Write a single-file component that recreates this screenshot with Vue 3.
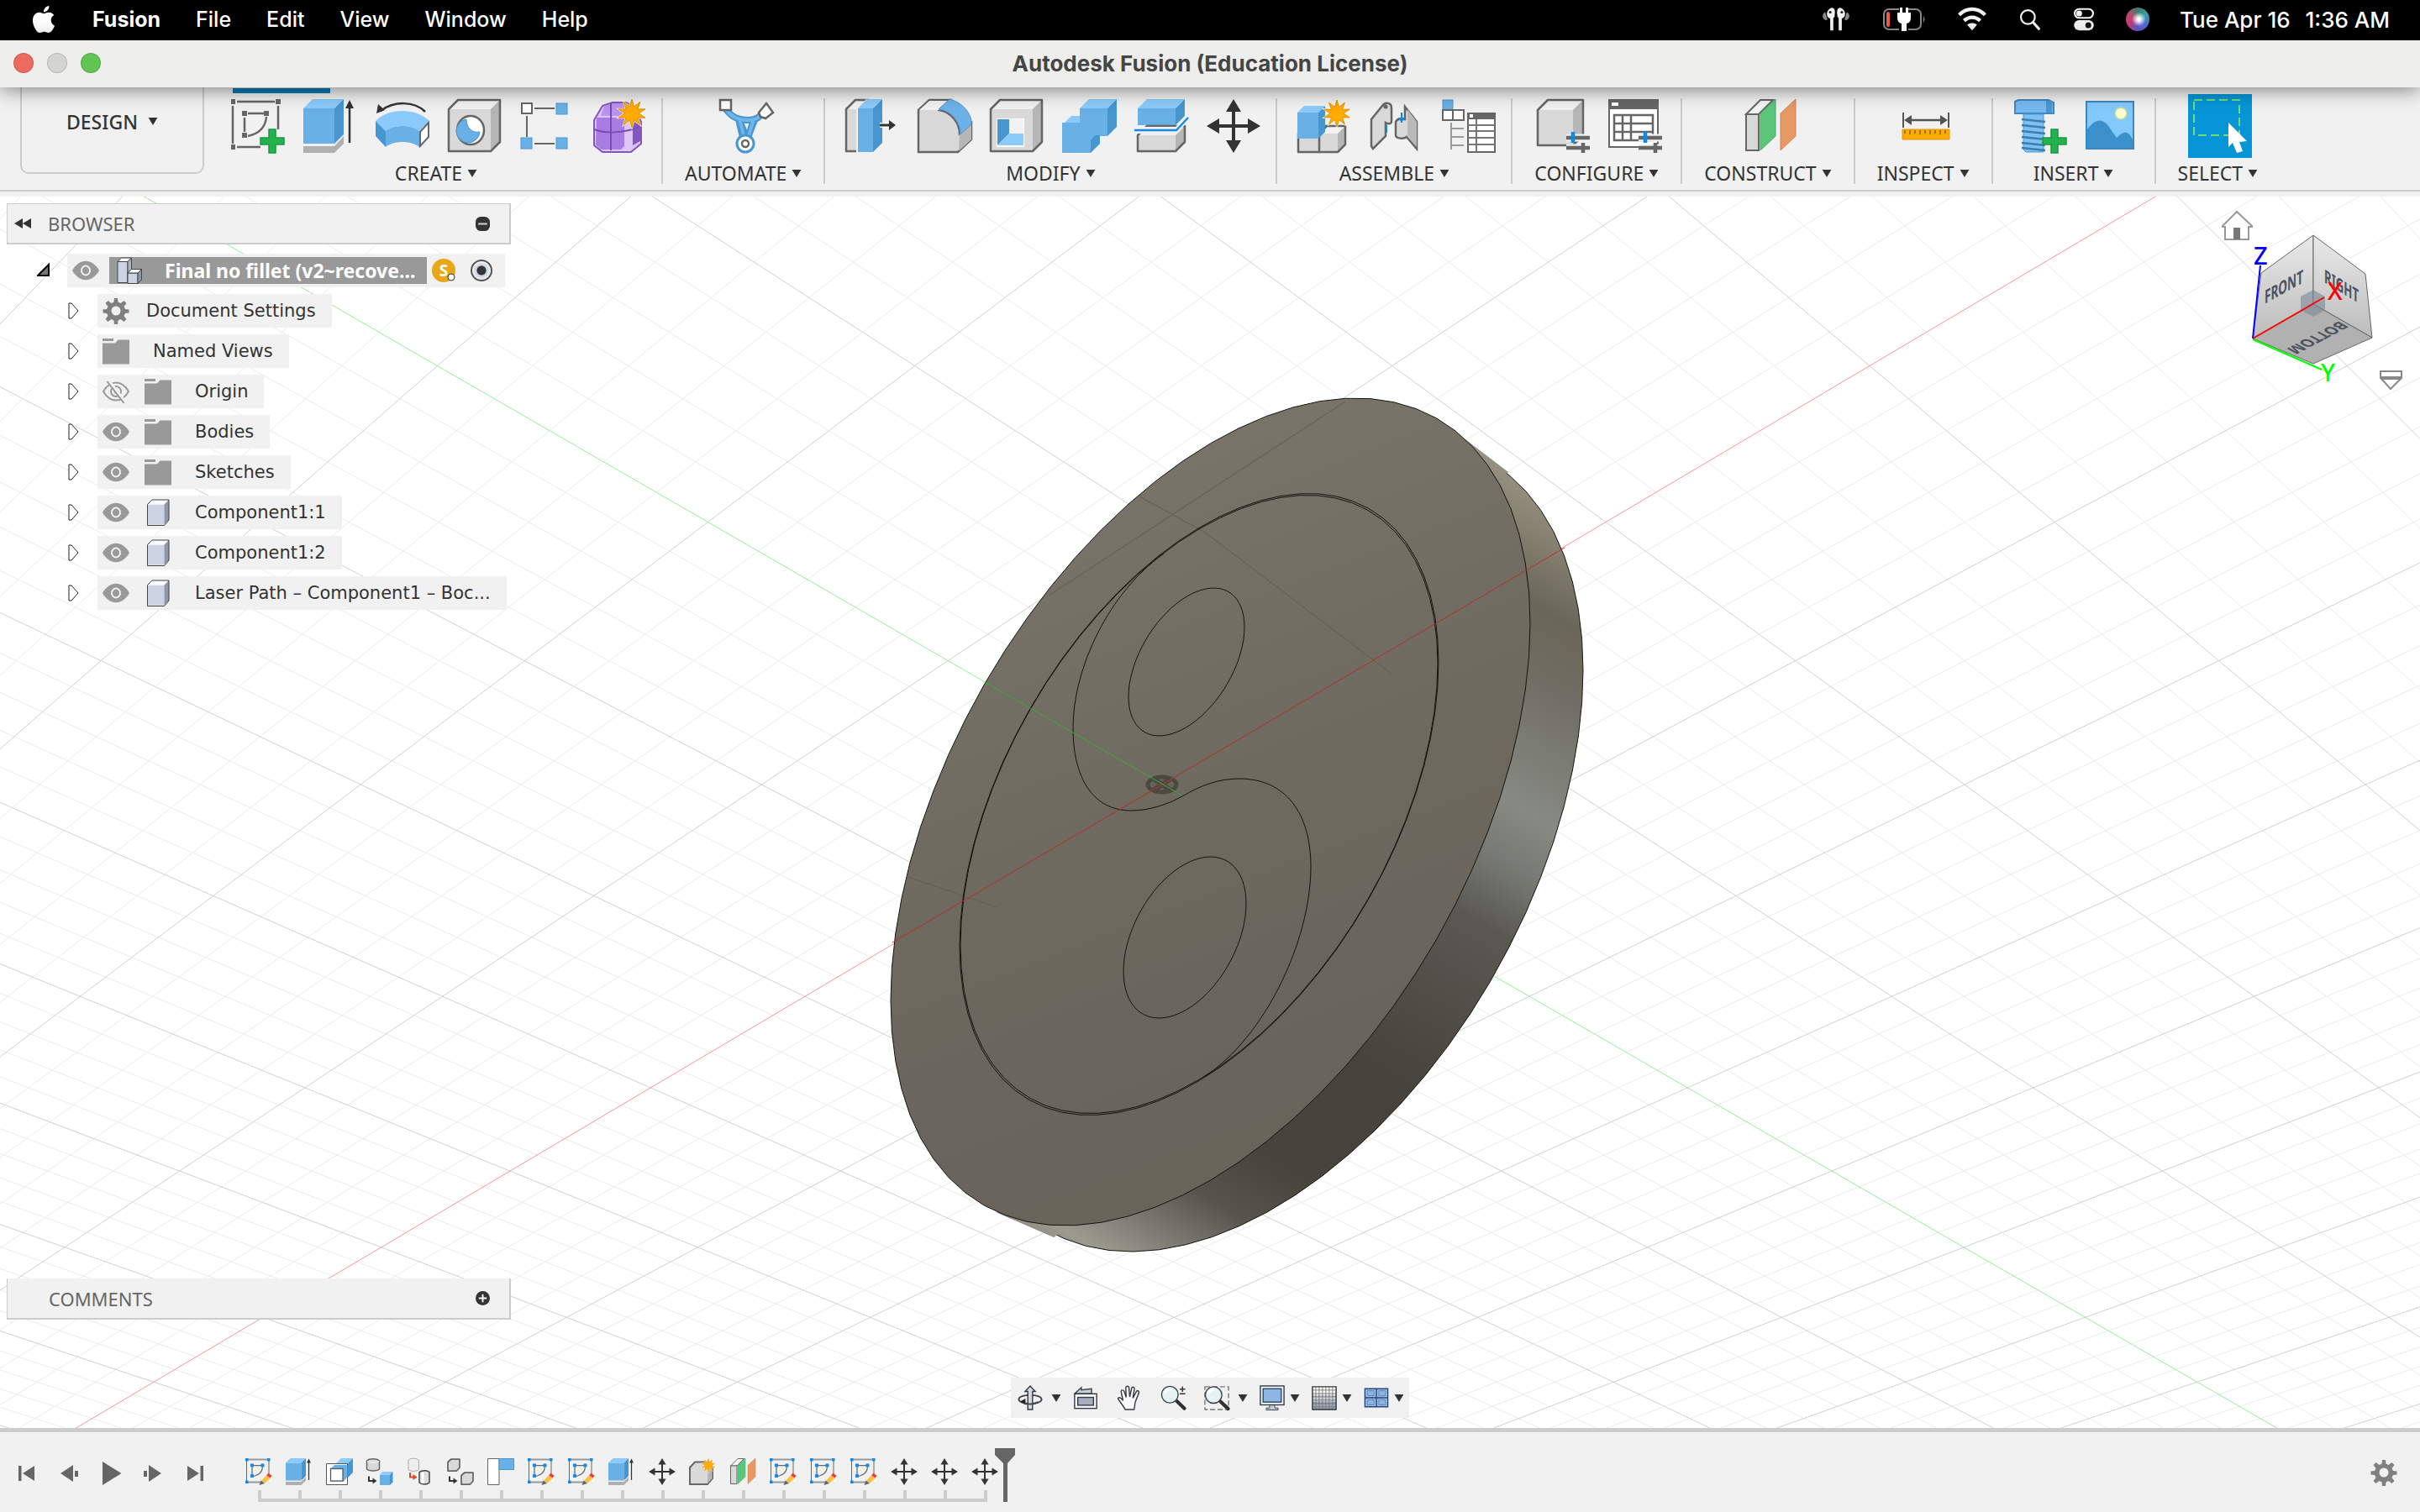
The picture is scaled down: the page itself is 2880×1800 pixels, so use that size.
<script setup>
import { h } from 'vue'

const starPoints = (cx, cy, outer, inner, n = 10) =>
  Array.from({ length: n * 2 }, (_, k) => {
    const r = k % 2 ? inner : outer
    const a = (Math.PI * k) / n - Math.PI / 2
    return `${(cx + r * Math.cos(a)).toFixed(1)},${(cy + r * Math.sin(a)).toFixed(1)}`
  }).join(' ')

const star = (cx, cy, r) =>
  `<polygon points="${starPoints(cx, cy, r + 3, r / 2 + 2)}" fill="#f8f8f8"/><polygon points="${starPoints(cx, cy, r, r / 2)}" fill="#ffab00" stroke="#e09000" stroke-width="1"/>`

const plus = '<path d="M45 36h8v10h10v8h-10v10h-8v-10h-10v-8h10z" fill="#25b14f" stroke="#1b9741" stroke-width="1.5"/>'

// Shaded box: front, top and right faces
const box = (x, y, w, ht, d, c, s = 'none', sw = 2) =>
  `<g stroke="${s}" stroke-width="${sw}" stroke-linejoin="round"><path d="M${x} ${y + d}h${w}v${ht}h${-w}z" fill="${c[0]}"/><path d="M${x} ${y + d}l${d} ${-d}h${w}l${-d} ${d}z" fill="${c[1]}"/><path d="M${x + w} ${y + d}l${d} ${-d}v${ht}l${-d} ${d}z" fill="${c[2]}"/></g>`

const blue = ['#69b0e6', '#8bcbfb', '#4896d0']
const grey = ['#d9d9d9', '#f2f2f2', '#b6b6b6']
const outline = (x, y, w, ht, d) =>
  `<path d="M${x} ${y + d}l${d} ${-d}h${w}v${ht}l${-d} ${d}h${-w}z" fill="none" stroke="#666" stroke-width="2.5" stroke-linejoin="round"/>`
const greyBox = (x, y, w, ht, d) => box(x, y, w, ht, d, grey) + outline(x, y, w, ht, d)

const sliders = '<path d="M36 46h28M36 58h28" stroke="#f1f1f1" stroke-width="9"/><path d="M36 46h28M36 58h28M56 52v12" stroke="#666" stroke-width="4.500"/><path d="M44 39v13" stroke="#0b8be8" stroke-width="4.500"/>'
const sketchLines = '<path d="M7 3h45M2 8v45M56 8v28M7 57h28M20 17h19M16 22v17M42 21c-1 12-8 20-22 23" fill="none" stroke="#666" stroke-width="2.500"/>'
const gear = '<path d="M28 2h8l1 9 6 3 8-6 6 6-6 8 3 6 9 1v8l-9 1-3 6 6 8-6 6-8-6-6 3-1 9h-8l-1-9-6-3-8 6-6-6 6-8-3-6-9-1v-8l9-1 3-6-6-8 6-6 8 6 6-3z" fill="#808080"/>'

const glyphs = {
  sketch: sketchLines + '<g fill="#666"><path d="M0 0h5v6h-5zM53 0h6v6h-6zM0 54h5v6h-5zM13 14h6v6h-6zM39 14h6v6h-6zM13 40h6v6h-6z"/></g>' + plus,
  sketchEdit: '<path d="M6 3h48M6 57h34" stroke="#999" stroke-width="4"/><path d="M3 6v48M56 6v32" stroke="#666" stroke-width="2"/><path d="M20 17h18M16 21v18M41 21c-1 12-8 19-21 22" fill="none" stroke="#666" stroke-width="2.500"/><g fill="#138be8"><path d="M0 0h7v7h-7zM52 0h7v7h-7zM0 53h7v7h-7zM12 13h8v8h-8zM37 13h8v8h-8zM12 38h8v8h-8z"/></g><path d="M55 35l8 7-4 5-9-6z" fill="#f03a3a"/><path d="M50 41l9 7-13 12-9-6z" fill="#f9bf43"/><path d="M37 53l9 7-13 4z" fill="#666"/>',
  extrude: box(0, 0, 37, 42, 11, blue) + '<path d="M0 56h37l11-12v9l-11 11h-37z" fill="#b0b0b0"/><path d="M55 52v-44" stroke="#333" stroke-width="2.500"/><path d="M50 11h10l-5-10z" fill="#333"/>',
  revolve: '<path d="M59 15c-13-13-37-13-53-1" fill="none" stroke="#333" stroke-width="2.500"/><path d="M1 17l2-11 8 7z" fill="#333"/><path d="M0 26c15-16 48-16 64 0l-12 12c-10-8-30-8-40 0z" fill="#8bcbfb"/><path d="M12 38c10-8 30-8 40 0v19c-10-8-30-8-40 0z" fill="#69b0e6"/><path d="M0 26l12 12v19l-12-13z" fill="#4896d0"/><path d="M53 39l10-11v17l-10 11z" fill="#fff" stroke="#666" stroke-width="2"/>',
  hole: greyBox(1, 1, 50, 50, 11) + '<ellipse cx="27" cy="37" rx="16" ry="17" fill="#fff" stroke="#666" stroke-width="2.500"/><path d="M22 24a14 14 0 1 0 16 15c-9 2-16-5-16-15z" fill="#69b0e6" stroke="#4896d0"/>',
  pattern: '<path d="M17 11h24M8 20v25M17 53h24" stroke="#666" stroke-width="2"/><rect x="2" y="5" width="12" height="12" fill="#fff" stroke="#666" stroke-width="2"/><g fill="#69b0e6" stroke="#4a98d2"><rect x="43" y="5" width="13" height="13"/><rect x="1" y="46" width="13" height="13"/><rect x="43" y="46" width="13" height="13"/></g>',
  form: '<path d="M12 8l12-4h16l10 5 8 18v26l-12 10h-34l-10-8v-30z" fill="#dcc6f5" stroke="#8258b5" stroke-width="2"/><path d="M14 8l10-3h14l6 4-6 11h-28z" fill="#ba92ef"/><path d="M5 22h33v34l-4 4h-24l-6-6z" fill="#a87ce2"/><path d="M48 24l9 6v20l-9 5z" fill="#8655c2"/><path d="M2 36c12 5 34 5 54-3M22 5v56" fill="none" stroke="#7a4cb2" stroke-width="2"/>' + star(47, 17, 17),
  automate: '<path d="M7 11c8 11 16 14 28 14s15-7 19-12M23 24l6 26M41 24l-8 26M24 25h18l-9 23z" fill="none" stroke="#4997d2" stroke-width="8"/><path d="M7 11c8 11 16 14 28 14s15-7 19-12M24 24l7 26M41 24l-8 26" fill="none" stroke="#6fb5ea" stroke-width="4"/><path d="M1 1h13v12h-13z" fill="#fff" stroke="#666" stroke-width="2.500"/><path d="M47 16l9-11 8 11-9 7-6-2z" fill="#fff" stroke="#666" stroke-width="2.500"/><circle cx="31" cy="53" r="10" fill="#fff" stroke="#4997d2" stroke-width="3"/><circle cx="31" cy="53" r="4" fill="#fff" stroke="#666" stroke-width="2.500"/>',
  pressPull: greyBox(1, 1, 16, 50, 11) + '<path d="M13 12l12-12h21v51l-12 13h-21z" fill="#f1f1f1"/>' + box(15, 0, 18, 52, 11, blue) + '<path d="M41 31h13" stroke="#fff" stroke-width="6"/><path d="M41 31h13" stroke="#333" stroke-width="3"/><path d="M52 25l8 6-8 6z" fill="#333"/>',
  fillet: '<path d="M1 13l13-12h24l-12 12c14 2 24 16 24 28l14-13v20l-16 15h-47z" fill="#d9d9d9" stroke="#666" stroke-width="2.500"/><path d="M2 13l12-11h24l-12 11z" fill="#f2f2f2"/><path d="M50 41l14-11v18l-15 14z" fill="#b6b6b6"/><path d="M25 12l13-12c16 4 27 18 26 30l-13 12c0-14-10-28-26-30z" fill="#6cb2e8" stroke="#4896d0"/>',
  shell: greyBox(1, 1, 50, 50, 11) + '<path d="M8 23h33v34h-33z" fill="#fff"/><path d="M9 24h14v17l-14 14z" fill="#4896d0"/><path d="M23 41h17v14h-31z" fill="#8bcbfb"/><path d="M23 24h17v17h-17z" fill="#f2f2f2"/>',
  combine: box(21, 0, 33, 33, 11, blue) + box(0, 20, 34, 33, 11, blue) + '<path d="M21 12h33v31h-15l-5 6h-34v-21h21z" fill="#69b0e6"/>',
  split: box(4, 0, 45, 20, 11, blue) + greyBox(4, 32, 45, 19, 11) + '<path d="M0 33h49l15-15v8l-13 15h-51z" fill="#f1f1f1"/><path d="M0 37h50l14-15" fill="none" stroke="#138be8" stroke-width="2.500"/>',
  move: '<path d="M32 9v46M9 32h46" stroke="#333" stroke-width="4"/><path d="M32 0l9 15h-18zM32 64l9-15h-18zM0 32l15-9v18zM64 32l-15-9v18z" fill="#333"/>',
  newComponent: greyBox(1, 32, 25, 22, 9) + greyBox(26, 32, 22, 22, 9) + box(0, 8, 25, 31, 8, blue) + star(47, 17, 16),
  joint: '<path d="M2 24l13-16c3-5 11-4 11 2v16c0 4-4 4-7 2v16l-15 15-2-3z" fill="#d9d9d9" stroke="#666" stroke-width="2.500"/><circle cx="19" cy="9" r="2.500" fill="#666"/><path d="M42 9l14 18v32l-12-14c-3 3-13 2-13-2v-16c2-4 7-4 11-3z" fill="#d9d9d9" stroke="#666" stroke-width="2.500"/><path d="M45 12l11 15v30l-11-14z" fill="#b9b9b9"/><path d="M20 31v9M38 16v12" stroke="#0b8be8" stroke-width="2"/><path d="M34 22h8l-4 6z" fill="#0b8be8"/>',
  bom: '<rect x="1" y="1" width="12" height="12" fill="#69b0e6" stroke="#4896d0"/><path d="M1 13h12v12h-12zM13 13h13v12h-13z" fill="#fff" stroke="#666" stroke-width="2"/><path d="M11 28v32M11 35h15M11 45h15M11 55h15" stroke="#999" stroke-width="2"/><rect x="31" y="17" width="32" height="46" fill="#fff" stroke="#666" stroke-width="2"/><path d="M30 16h34v8h-34z" fill="#666"/><path d="M31 31h32M31 38h32M31 46h32M31 54h32M41 24v39" stroke="#777" stroke-width="2"/><path d="M33 18h4v4h-4z" fill="#fff"/>',
  configure: greyBox(2, 1, 42, 42, 12) + sliders,
  configTable: '<rect x="1" y="1" width="58" height="56" fill="#fff" stroke="#666" stroke-width="2"/><path d="M0 0h60v12h-60z" fill="#666"/><path d="M4 4h8v4h-8z" fill="#fff"/><path d="M7 19h46v30h-46zM7 29h46M7 39h46M17 19v30M27 19v30" fill="none" stroke="#666" stroke-width="2.500"/>' + sliders,
  plane: '<path d="M3 18l17-17h15l-17 17z" fill="#f5f5f5" stroke="#666" stroke-width="2"/><path d="M3 18h15v43h-15z" fill="#d9d9d9" stroke="#666" stroke-width="2"/><path d="M20 17l18-17v44l-18 17z" fill="#5bc67c" stroke="#43a964"/><path d="M44 17l18-17v44l-18 17z" fill="#e69964" stroke="#cf8350"/>',
  measure: '<path d="M5 16v18M59 16v18" stroke="#555" stroke-width="2"/><path d="M12 25h40" stroke="#555" stroke-width="2.500"/><path d="M6 25l9-6v12zM58 25l-9-6v12z" fill="#555"/><path d="M4 36h56v12h-56z" fill="#ffab00" stroke="#e59400"/><path d="M7 37v4M13 37v5M19 37v4M25 37v5M31 37v4M37 37v5M43 37v4M49 37v5M55 37v4" stroke="#80601c" stroke-width="1.500"/>',
  bolt: '<path d="M2 3l4-2h36l6 3v13h-46z" fill="#76baf0" stroke="#3f87bd" stroke-width="2"/><path d="M39 2h7v14h-7z" fill="#4b97d0"/><path d="M12 18h24v45h-21l-3-3z" fill="#7cc0f5" stroke="#4d9bd5"/><path d="M10 24l28 3M10 31l28 3M10 38l28 3M10 45l28 3M10 52l28 3M10 58l28 3" stroke="#3d7eac" stroke-width="2.500"/>' + plus,
  image: '<rect x="1" y="3" width="56" height="56" fill="#84c9fc" stroke="#3d88bd" stroke-width="2"/><circle cx="42" cy="17" r="7" fill="#ffffd0" stroke="#b5dba0" stroke-width="1.500"/><path d="M2 36c10-14 20-14 28 0l7 10c9-9 13-9 19 2v10h-54z" fill="#3c91cd"/>',
  select: '<path d="M0-6h76v76h-76z" fill="#0696d7"/><path d="M7 1h54v42h-54z" fill="none" stroke="#72dd78" stroke-width="2" stroke-dasharray="10 5"/><path d="M48 28l22 22-9 1 4 11-7 2-5-12-5 5z" fill="#fff"/>',
  boxCopy: box(24, 0, 28, 34, 12, blue) + '<path d="M1 13h50v50h-50z" fill="#fff" stroke="#555" stroke-width="2"/><path d="M11 25l9-9h31v28l-9 11h-31z" fill="#69b0e6"/><rect x="11" y="25" width="29" height="29" fill="#fff" stroke="#555" stroke-width="2.500"/>',
  cylToBox: '<path d="M1 6c6-6 24-6 30 0v20c-6 5-24 5-30 0z" fill="#d9d9d9" stroke="#666" stroke-width="3"/><path d="M2 7c6 4 22 4 28 0" fill="none" stroke="#eee" stroke-width="3"/>' + box(32, 32, 24, 25, 7, blue) + '<path d="M6 43v11h10" fill="none" stroke="#333" stroke-width="4"/><path d="M15 47l10 7-10 7z" fill="#333"/>',
  cylToCyl: '<path d="M4 5c5-6 20-6 25 0v22c-5 5-20 5-25 0z" fill="#eee" stroke="#aaa" stroke-width="2"/><path d="M30 33c5-5 19-5 24 0v25c-5 5-19 5-24 0z" fill="#ddd" stroke="#444" stroke-width="3"/><path d="M38 34v26" stroke="#fff" stroke-width="6"/><path d="M8 34v11h9" fill="none" stroke="#dd4a26" stroke-width="4"/><path d="M15 38l10 7-10 7z" fill="#dd4a26"/>',
  boxToBox: '<g fill="#d9d9d9" stroke="#666" stroke-width="3.500" stroke-linejoin="round"><path d="M2 9l8-7h20v20l-7 8h-21zM34 41l8-7h20v20l-7 8h-21z"/></g><path d="M6 43v11h10" fill="none" stroke="#333" stroke-width="4"/><path d="M15 47l10 7-10 7z" fill="#333"/>',
  rigid: '<path d="M1 1h27v62h-27z" fill="#fff" stroke="#666" stroke-width="2"/><path d="M28 1h35v26h-35z" fill="#69b0e6" stroke="#4896d0" stroke-width="2"/>',
  body: '<path d="M2 22l12-13h30l12 12v27l-12 14h-42z" fill="#d9d9d9" stroke="#666" stroke-width="4"/><path d="M44 26l11-6v28l-11 12z" fill="#b6b6b6"/>' + star(46, 17, 16),
  gear: gear + '<circle cx="32" cy="32" r="11" fill="#f1f1f1"/>',
  folder: '<path d="M0 5h26" fill="none" stroke="#999" stroke-width="6"/><path d="M0 13h30l7-8h27v58h-64z" fill="#999"/>',
  eye: '<path d="M0 32c17-30 47-30 64 0c-17 30-47 30-64 0z" fill="#999"/><ellipse cx="32" cy="32" rx="10" ry="11" fill="#999" stroke="#f1f1f1" stroke-width="4"/>',
  eyeOff: '<path d="M2 32c16-28 44-28 60 0c-16 28-44 28-60 0z" fill="none" stroke="#999" stroke-width="4"/><circle cx="32" cy="32" r="12" fill="none" stroke="#999" stroke-width="4"/><circle cx="32" cy="32" r="5" fill="#999"/><path d="M14 6l40 52" stroke="#f1f1f1" stroke-width="8"/><path d="M11 8l40 52" stroke="#999" stroke-width="4"/>',
  comp: box(7, 2, 40, 48, 11, ['#ccd3e2', '#fafbfd', '#8d97aa']) + '<path d="M7 13l11-11h40v48l-11 13h-40z" fill="none" stroke="#444" stroke-width="2"/>',
  assembly: box(4, 2, 24, 50, 9, ['#ccd3e2', '#fafbfd', '#aab3c5'], '#444', 2) + box(28, 29, 24, 25, 9, ['#ccd3e2', '#fafbfd', '#8d97aa'], '#444', 2),
  first: '<path d="M8 14h7v36h-7zM46 14v36l-28-18z" fill="#666"/>',
  back: '<path d="M40 12v40l-30-20zM44 26h8v14h-8z" fill="#666"/>',
  play: '<path d="M12 4v56l45-28z" fill="#666"/>',
  next: '<path d="M24 12v40l30-20zM12 26h8v14h-8z" fill="#666"/>',
  last: '<path d="M49 14h7v36h-7zM18 14v36l28-18z" fill="#666"/>',
  orbit: '<ellipse cx="32" cy="36" rx="29" ry="11" fill="none" stroke="#41464f" stroke-width="4"/><path d="M26 62v-46h-7l13-14 13 14h-7v46z" fill="#d5dae2" stroke="#333a45" stroke-width="3"/><path d="M7 41l13-7v16z" fill="#222"/><path d="M16 46c10 3 26 3 36-3" fill="none" stroke="#41464f" stroke-width="4"/>',
  look: '<path d="M5 21l16-15v6l26-3v13z" fill="#c7ccd5" stroke="#3a414c" stroke-width="3"/><rect x="4" y="22" width="56" height="37" fill="#fafafa" stroke="#333a45" stroke-width="3"/><rect x="12" y="31" width="40" height="20" fill="#a7adbb" stroke="#333a45" stroke-width="3"/>',
  hand: '<path d="M22 62c-6-11-14-19-19-28 2-5 7-3 13 5l-5-23c1-5 6-4 8 0l5 15-1-25c2-5 7-4 8 0l2 24 5-23c3-4 7-2 7 2l-4 24 9-17c3-4 8-1 6 4l-9 23-3 19z" fill="#fafafa" stroke="#333a45" stroke-width="3"/>',
  zoom: '<path d="M41 40l20 19" stroke="#2c3138" stroke-width="9" stroke-linecap="round"/><circle cx="24" cy="24" r="21" fill="#e6f2f3" stroke="#3a414c" stroke-width="3"/><path d="M11 20q4-9 14-10" stroke="#fff" stroke-width="6" fill="none"/><path d="M49 10h14M56 3v14M49 22h14" stroke="#333" stroke-width="3"/>',
  zoomFit: '<path d="M2 4h60v58h-60z" fill="none" stroke="#777" stroke-width="3" stroke-dasharray="13 6"/><path d="M41 41l20 19" stroke="#33312c" stroke-width="9" stroke-linecap="round"/><circle cx="24" cy="25" r="21" fill="#e6f2f3" stroke="#3a414c" stroke-width="3"/><path d="M11 21q4-9 14-10" stroke="#fff" stroke-width="6" fill="none"/>',
  monitor: '<path d="M26 50h12l1 8h8v5h-30v-5h8z" fill="#c9ced8" stroke="#333a45" stroke-width="2"/><rect x="2" y="2" width="60" height="48" fill="#fafafa" stroke="#333a45" stroke-width="3"/><rect x="9" y="9" width="46" height="34" fill="#8fb6e0" stroke="#26457c" stroke-width="3"/>',
  grid: '<path d="M2 4h60v58h-60z" fill="#fff"/><path d="M2 24h60v38h-60z" fill="#a0a9b9" opacity=".5"/><path d="M2 42h60v20h-60z" fill="#6e7a90" opacity=".5"/><path d="M2 12.500h60M2 21h60M2 29.500h60M2 38h60M2 46.500h60M2 55h60M10.500 4v58M19 4v58M27.500 4v58M36 4v58M44.500 4v58M53 4v58" stroke="#777" stroke-width="2"/><path d="M2 4h60v58h-60z" fill="none" stroke="#333" stroke-width="3"/>',
  views: '<path d="M3 9h58v46h-58z" fill="#9cc0e8" stroke="#26457c" stroke-width="3"/><path d="M32 9v46M3 32h58" stroke="#26457c" stroke-width="3"/><path d="M9 14h17v13h-17zM38 14h17v13h-17zM9 37h17v13h-17zM38 37h17v13h-17z" fill="#8fb4df" stroke="#5b83b9" stroke-width="2"/>',
  airpods: '<g fill="#f2f2f2"><path d="M14 12c10-12 18-4 15 10v4l-3 3v28h-7v-27c-8-2-9-12-5-18zM50 12c-10-12-18-4-15 10v4l3 3v28h7v-27c8-2 9-12 5-18z"/></g><path d="M8 16l5 17-4 1c-9-3-9-15-1-18zM56 16l-5 17 4 1c9-3 9-15 1-18z" fill="#8a8a8a"/><circle cx="19" cy="16" r="3" fill="#222"/><circle cx="45" cy="16" r="3" fill="#222"/>',
  wifi: '<g fill="none" stroke="#f2f2f2" stroke-width="8"><path d="M3 22c17-17 41-17 58 0M14 35c11-10 25-10 36 0"/></g><path d="M21 44c7-5 15-5 22 0l-11 13z" fill="#f2f2f2"/>',
  search: '<circle cx="26" cy="26" r="19" fill="none" stroke="#f2f2f2" stroke-width="5"/><path d="M40 40l16 18" stroke="#f2f2f2" stroke-width="7" stroke-linecap="round"/>',
  control: '<rect x="7" y="4" width="50" height="24" rx="12" fill="none" stroke="#f2f2f2" stroke-width="5"/><circle cx="19" cy="16" r="8" fill="#f2f2f2"/><rect x="5" y="34" width="54" height="28" rx="14" fill="#f2f2f2"/><circle cx="44" cy="48" r="8" fill="#111"/>',
}

const Icon = (props) =>
  h('svg', { viewBox: '0 0 64 64', class: 'icon', 'aria-hidden': 'true', innerHTML: glyphs[props.name] })
Icon.props = ['name']

const Caret = () =>
  h('svg', { viewBox: '0 0 12 10', class: 'caret', 'aria-hidden': 'true' }, [h('path', { d: 'M0 0h12l-6 10z', fill: '#333' })])

const menus = ['File', 'Edit', 'View', 'Window', 'Help']

const groups = [
  { label: 'CREATE', icons: ['sketch', 'extrude', 'revolve', 'hole', 'pattern', 'form'] },
  { label: 'AUTOMATE', icons: ['automate'] },
  { label: 'MODIFY', icons: ['pressPull', 'fillet', 'shell', 'combine', 'split', 'move'] },
  { label: 'ASSEMBLE', icons: ['newComponent', 'joint', 'bom'] },
  { label: 'CONFIGURE', icons: ['configure', 'configTable'] },
  { label: 'CONSTRUCT', icons: ['plane'] },
  { label: 'INSPECT', icons: ['measure'] },
  { label: 'INSERT', icons: ['bolt', 'image'] },
  { label: 'SELECT', icons: ['select'] },
]

const tree = [
  { label: 'Document Settings', icons: ['gear'], near: true },
  { label: 'Named Views', icons: ['folder'] },
  { label: 'Origin', icons: ['eyeOff', 'folder'] },
  { label: 'Bodies', icons: ['eye', 'folder'] },
  { label: 'Sketches', icons: ['eye', 'folder'] },
  { label: 'Component1:1', icons: ['eye', 'comp'] },
  { label: 'Component1:2', icons: ['eye', 'comp'] },
  { label: 'Laser Path – Component1 – Boc...', icons: ['eye', 'comp'] },
]

const navTools = [
  { icon: 'orbit', label: 'Orbit', caret: true, wide: true },
  { icon: 'look', label: 'Look At' },
  { icon: 'hand', label: 'Pan' },
  { icon: 'zoom', label: 'Zoom' },
  { icon: 'zoomFit', label: 'Fit', caret: true, wide: true },
  { icon: 'monitor', label: 'Display Settings', caret: true },
  { icon: 'grid', label: 'Grid and Snaps', caret: true },
  { icon: 'views', label: 'Viewports', caret: true },
]

const playback = [
  { icon: 'first', label: 'Go to start' },
  { icon: 'back', label: 'Step back' },
  { icon: 'play', label: 'Play' },
  { icon: 'next', label: 'Step forward' },
  { icon: 'last', label: 'Go to end' },
]

const timeline = [
  'sketchEdit', 'extrude', 'boxCopy', 'cylToBox', 'cylToCyl', 'boxToBox', 'rigid', 'sketchEdit', 'sketchEdit', 'extrude',
  'move', 'body', 'plane', 'sketchEdit', 'sketchEdit', 'sketchEdit', 'move', 'move', 'move',
]

// Ground plane projection: i runs along X, j along Y, in major grid units
const project = (i, j) => {
  const s = j - i
  const t = i + j
  const w = 1 + 0.05336 * s
  return `${((1383.5 + 76.84 * s + 238.6 * t) / w).toFixed(1)} ${((934 + 189.4 * s) / w).toFixed(1)}`
}
const lineI = (i) => `M${project(i, Math.max(-10, i - 12))}L${project(i, 11)}`
const lineJ = (j) => `M${project(Math.min(10, j + 12), j)}L${project(-11, j)}`
let major = ''
let minor = ''
for (let n = -50; n <= 50; n++) {
  if (n === 0) continue
  const seg = lineI(n / 5) + lineJ(n / 5)
  if (n % 5) minor += seg
  else major += seg
}
const xAxis = lineJ(0)
const yAxis = lineI(0)

// Circle seen in perspective: half extents a and b, skew r
const ring = (cx, cy, a, b, r, n = 72) => {
  const q = Math.sqrt(1 - r * r)
  let d = ''
  for (let k = 0; k < n; k++) {
    const th = (2 * Math.PI * k) / n
    const x = cx + a * Math.cos(th)
    const y = cy - b * (r * Math.cos(th) + q * Math.sin(th))
    d += `${k ? 'L' : 'M'}${x.toFixed(1)} ${y.toFixed(1)}`
  }
  return d + 'Z'
}
const face = ring(1440.5, 966.5, 380.5, 492.5, 0.455)
const backRim = ring(1508, 1006, 376, 484, 0.43)
const inner = ring(1427, 957.5, 284, 368, 0.455)
const innerEdge = ring(1427, 957.5, 285, 370, 0.457)
const eyeTop = ring(1412, 788, 69, 88, 0.47)
const eyeLow = ring(1410, 1116, 73, 96, 0.42)
</script>

<template>
  <div class="app">
    <header class="menubar">
      <nav class="menus" aria-label="Menu bar">
        <button class="apple" aria-label="Apple menu">
          <svg viewBox="0 0 24 24"><path fill="#fff" d="M12.152 6.896c-.948 0-2.415-1.078-3.96-1.04-2.04.027-3.91 1.183-4.961 3.014-2.117 3.675-.546 9.103 1.519 12.09 1.013 1.454 2.208 3.09 3.792 3.039 1.52-.065 2.09-.987 3.935-.987 1.831 0 2.35.987 3.96.948 1.637-.026 2.676-1.48 3.676-2.948 1.156-1.688 1.636-3.325 1.662-3.415-.039-.013-3.182-1.221-3.22-4.857-.026-3.04 2.48-4.494 2.597-4.559-1.429-2.09-3.623-2.324-4.39-2.376-2-.156-3.675 1.09-4.61 1.09zM15.53 3.83c.843-1.012 1.4-2.427 1.245-3.83-1.207.052-2.662.805-3.532 1.818-.78.896-1.454 2.338-1.273 3.714 1.338.104 2.715-.688 3.559-1.701" /></svg>
        </button>
        <button class="strong">Fusion</button>
        <button v-for="m in menus" :key="m">{{ m }}</button>
      </nav>
      <div class="status">
        <Icon name="airpods" class="pods" />
        <svg class="battery" viewBox="0 0 52 28"><path d="M20 2H8a6 6 0 0 0-6 6v12a6 6 0 0 0 6 6h12M31 2h9a6 6 0 0 1 6 6v12a6 6 0 0 1-6 6h-9" fill="none" stroke="#8a8a8a" stroke-width="2" /><path d="M49 10q3 4 0 8z" fill="#8a8a8a" /><rect x="5" y="5" width="4" height="18" rx="2" fill="#f4564a" /><path d="M21 0h3v6h4V0h3v6h3v6q0 6-5 7v9h-6v-9q-5-1-5-7V6h3z" fill="#fff" /></svg>
        <Icon name="wifi" class="wifi" />
        <Icon name="search" />
        <Icon name="control" />
        <span class="siri"></span>
        <time class="clock"><span>Tue Apr 16</span><span>1:36 AM</span></time>
      </div>
    </header>

    <div class="titlebar">
      <div class="lights">
        <button class="light red" aria-label="Close"></button>
        <button class="light off" aria-label="Minimize"></button>
        <button class="light green" aria-label="Zoom"></button>
      </div>
      <h1>Autodesk Fusion (Education License)</h1>
    </div>

    <div class="toolbar">
      <button class="workspace">DESIGN <Caret /></button>
      <div class="groups">
        <section v-for="g in groups" :key="g.label" class="group" :class="g.label.toLowerCase()">
          <div class="tools">
            <button v-for="ic in g.icons" :key="ic" class="tool" :aria-label="ic"><Icon :name="ic" /></button>
          </div>
          <button class="glabel">{{ g.label }}<Caret /></button>
        </section>
      </div>
    </div>

    <main class="viewport">
      <svg class="scene" viewBox="0 234 2880 1466" preserveAspectRatio="xMidYMid slice" aria-hidden="true">
        <defs>
          <linearGradient id="side" gradientUnits="userSpaceOnUse" x1="1800" y1="540" x2="1250" y2="1480">
            <stop offset="0" stop-color="#9d9686" />
            <stop offset=".05" stop-color="#8b8575" />
            <stop offset=".13" stop-color="#6a6658" />
            <stop offset=".2" stop-color="#706e64" />
            <stop offset=".33" stop-color="#868a83" />
            <stop offset=".39" stop-color="#777a74" />
            <stop offset=".46" stop-color="#5a5852" />
            <stop offset=".66" stop-color="#46433c" />
            <stop offset=".8" stop-color="#46443d" />
            <stop offset=".87" stop-color="#56544d" />
            <stop offset=".93" stop-color="#7c7b72" />
            <stop offset=".98" stop-color="#9b9b90" />
            <stop offset="1" stop-color="#8f8c7f" />
          </linearGradient>
          <linearGradient id="face" x1=".3" y1="0" x2=".6" y2="1">
            <stop offset="0" stop-color="#7b766b" />
            <stop offset=".45" stop-color="#6f6b60" />
            <stop offset=".8" stop-color="#69645c" />
            <stop offset="1" stop-color="#68655a" />
          </linearGradient>
          <clipPath id="disc"><path :d="face" /></clipPath>
        </defs>
        <path :d="minor" class="minor" />
        <path :d="major" class="major" />
        <path :d="xAxis" class="x" />
        <path :d="yAxis" class="y" />
        <path :d="backRim" fill="url(#side)" class="edge" />
        <path d="M1724 508L1795 562L1700 620ZM1185 1443L1254 1473L1300 1440Z" fill="url(#side)" />
        <path :d="face" fill="url(#face)" class="edge" />
        <g class="ghost" clip-path="url(#disc)">
          <path d="M1326 575L1433 633L1657 803M1601 478L1248 709M1040 1030L1186 1080" />
        </g>
        <g class="edge" fill="none">
          <path :d="inner" />
          <path :d="innerEdge" />
          <path :d="eyeTop" />
          <path :d="eyeLow" />
          <path d="M1385 659C1320 705 1277 795 1277 867C1277 925 1300 965 1346 965C1367 965 1389 958 1407 948C1429 935 1450 927 1475 927C1530 927 1560 968 1560 1032C1560 1120 1505 1235 1433 1282" />
        </g>
        <ellipse cx="1383" cy="934" rx="17" ry="9" fill="#68645a" stroke="#4c4940" stroke-width="5" />
        <path d="M1374 928L1392 940M1374 940L1392 928" stroke="#4c4940" stroke-width="6" />
        <path d="M1062 1122L1383 934L1862 652" class="x-over" />
        <path d="M1172 812L1407 947" class="y-over" />
      </svg>

      <div class="cube">
        <svg viewBox="2620 234 260 250" aria-label="View cube">
          <defs>
            <linearGradient id="cf" x1="0" y1="0" x2="0" y2="1"><stop offset="0" stop-color="#e9e9e9" /><stop offset="1" stop-color="#bcbcbc" /></linearGradient>
          </defs>
          <g stroke="#666" stroke-width="1">
            <path d="M2753 280L2691 325L2681 403L2753 362Z" fill="url(#cf)" />
            <path d="M2753 280L2815 326L2823 402L2753 362Z" fill="url(#cf)" />
            <path d="M2753 362L2681 403L2753 433L2823 402Z" fill="#b1b1b1" />
          </g>
          <g class="facelabel">
            <text transform="matrix(.68 -.38 0 1.1 2695 362)">FRONT</text>
            <text transform="matrix(.66 .4 0 1.1 2766 336)">RIGHT</text>
            <text transform="matrix(-.74 .39 -.84 -.46 2784 382)">BOTTOM</text>
          </g>
          <path d="M2753 345l14 8v16l-14 8-15-8v-16z" fill="#7b8794" opacity=".6" />
          <path d="M2681 403L2690 316" stroke="#00f" stroke-width="2" />
          <path d="M2681 404L2763 440" stroke="#0f0" stroke-width="2" />
          <path d="M2681 403L2766 354" stroke="#f00" stroke-width="2" />
          <g class="axis">
            <text x="2682" y="315" fill="#00f">Z</text>
            <text x="2770" y="357" fill="#f00">X</text>
            <text x="2762" y="454" fill="#0f0">Y</text>
          </g>
          <path d="M2645 269l17-17 18 17v1h-4v15h-28v-15h-3z" fill="#fff" stroke="#999" stroke-width="2" />
          <path d="M2658 271h8v14h-8z" fill="#777" />
          <path d="M2833 442h25v7h-25zM2834 451h23l-12 12z" fill="#fff" stroke="#888" stroke-width="2" />
        </svg>
      </div>

      <section class="browser">
        <div class="panel">
          <button class="collapse" aria-label="Collapse"><svg viewBox="0 0 20 12"><path d="M10 0v12l-10-6zM20 0v12l-10-6z" fill="#333" /></svg></button>
          <h2>BROWSER</h2>
          <button class="knob" aria-label="Minimize panel"><svg viewBox="0 0 16 16"><rect width="16" height="16" rx="6" fill="#333" /><path d="M3 8h10" stroke="#ccc" stroke-width="2" /></svg></button>
        </div>
        <div class="row root">
          <svg class="tri" viewBox="0 0 16 16"><path d="M1 14L14 1V14Z" fill="#777" stroke="#000" stroke-width="2" /></svg>
          <div class="cell">
            <Icon name="eye" />
            <div class="chosen"><Icon name="assembly" /><span>Final no fillet (v2~recove...</span></div>
            <svg class="badge" viewBox="0 0 28 28"><circle cx="14" cy="14" r="14" fill="#e6a817" /><text x="14" y="21" text-anchor="middle">S</text><circle cx="23" cy="22" r="4" fill="#fff" stroke="#333" /></svg>
            <input type="radio" checked aria-label="Activate component" />
          </div>
        </div>
        <div v-for="r in tree" :key="r.label" class="row">
          <svg class="tri" viewBox="0 0 16 20"><path d="M2 1h3l8 9-8 9h-3z" fill="#fff" stroke="#222" stroke-width="1" /></svg>
          <div class="cell" :class="{ near: r.near }">
            <Icon v-for="ic in r.icons" :key="ic" :name="ic" />
            <span class="name">{{ r.label }}</span>
          </div>
        </div>
      </section>

      <section class="panel comments">
        <h2>COMMENTS</h2>
        <button class="knob" aria-label="Add comment"><svg viewBox="0 0 18 18"><circle cx="9" cy="9" r="9" fill="#333" /><path d="M4 9h10M9 4v10" stroke="#fff" stroke-width="2" /></svg></button>
      </section>

      <div class="navbar">
        <button v-for="n in navTools" :key="n.icon" :aria-label="n.label" :class="{ wide: n.wide, plain: !n.caret }">
          <Icon :name="n.icon" /><Caret v-if="n.caret" />
        </button>
      </div>
    </main>

    <footer class="timeline">
      <div class="playback">
        <button v-for="p in playback" :key="p.icon" :aria-label="p.label"><Icon :name="p.icon" /></button>
      </div>
      <div class="track">
        <button v-for="(t, k) in timeline" :key="k" class="step" :aria-label="t"><Icon :name="t" /></button>
        <svg class="marker" viewBox="0 0 24 64"><path d="M0 0h24v8l-9 10v46h-5V18L0 8z" fill="#666" /></svg>
      </div>
      <button class="settings" aria-label="Timeline settings"><Icon name="gear" /></button>
    </footer>
  </div>
</template>

<style>
body {
  margin: 0;
  background: #fff;
}
.icon,
.caret {
  display: block;
  flex: none;
  overflow: visible;
}
.icon {
  width: 32px;
  height: 32px;
}
.caret {
  width: 12px;
  height: 9px;
}
</style>

<style scoped>
.app {
  min-height: 100vh;
  display: flex;
  flex-direction: column;
  font-family: "Noto Sans", sans-serif;
  font-size: 23px;
  color: #333;
}
button {
  border: 0;
  padding: 0;
  margin: 0;
  background: none;
  font: inherit;
  color: inherit;
}
svg {
  display: block;
}
h1,
h2 {
  margin: 0;
}
.menubar {
  height: 48px;
  box-sizing: border-box;
  background: #000;
  color: #fff;
  display: flex;
  justify-content: space-between;
  align-items: center;
  padding: 0 36px 2px;
  font: 500 25px "Inter", sans-serif;
}
.menus,
.status {
  display: flex;
  align-items: center;
}
.menus {
  gap: 42px;
}
.strong {
  font-weight: 700;
}
.apple svg {
  width: 32px;
  height: 32px;
}
.status {
  gap: 36px;
}
.status .icon {
  width: 28px;
  height: 28px;
}
.status .pods,
.status .wifi {
  width: 38px;
  height: 34px;
}
.battery {
  width: 52px;
  height: 28px;
}
.siri {
  width: 28px;
  height: 28px;
  border-radius: 50%;
  background: radial-gradient(circle at 55% 50%, #fff 0 8%, transparent 40%), conic-gradient(#3d7f6d, #35a0a5, #4d6ed6, #5f58c9, #c23a7a, #b54a68, #3d7f6d);
}
.clock {
  display: flex;
  gap: 18px;
  font-size: 26px;
}
.titlebar {
  position: relative;
  z-index: 2;
  height: 56px;
  box-sizing: border-box;
  padding-bottom: 2px;
  background: #eeeeec;
  display: flex;
  align-items: center;
  justify-content: center;
  box-shadow: 0 2px 24px rgba(0, 0, 0, 0.5);
}
.titlebar h1 {
  font: 700 26px "Inter", sans-serif;
  color: #454545;
}
.lights {
  position: absolute;
  left: 16px;
  display: flex;
  gap: 16px;
}
.light {
  width: 24px;
  height: 24px;
  border-radius: 50%;
  border: 1px solid #0002;
}
.red {
  background: #ed6a5f;
}
.off {
  background: #d4d4d2;
}
.green {
  background: #61c554;
}
.toolbar {
  height: 122px;
  background: #f1f1f1;
  border-bottom: 2px solid #ccc;
  box-shadow: 0 6px 0 #f1f1f1;
  margin-bottom: 6px;
  display: flex;
  align-items: flex-start;
  position: relative;
  z-index: 1;
}
.workspace {
  flex: none;
  width: 219px;
  height: 103px;
  margin-left: 24px;
  margin-right: 8px;
  padding-bottom: 20px;
  border: 2px solid #ccc;
  border-top: 0;
  border-radius: 0 0 10px 10px;
  display: flex;
  align-items: center;
  justify-content: center;
  gap: 12px;
  font-weight: 500;
}
.groups {
  display: flex;
  padding-top: 13px;
}
.group {
  height: 102px;
  box-sizing: border-box;
  border-right: 2px solid #ccc;
  padding: 1px 18px 0;
  display: flex;
  flex-direction: column;
  align-items: center;
  gap: 8px;
}
.group:last-child {
  border-right: 0;
}
.create {
  position: relative;
}
.create::before {
  content: "";
  position: absolute;
  left: 26px;
  top: -12px;
  width: 116px;
  height: 6px;
  background: #0a7cb8;
}
.tools {
  display: flex;
  gap: 22px;
  padding-left: 6px;
}
.tool .icon {
  width: 64px;
  height: 64px;
}
.select .tool {
  padding-right: 12px;
}
.glabel {
  display: flex;
  align-items: center;
  gap: 6px;
  padding: 0 8px;
  line-height: 32px;
}
.viewport {
  flex: 1;
  position: relative;
  background: #fff;
  overflow: hidden;
  display: flex;
  flex-direction: column;
  align-items: flex-start;
}
.scene {
  position: absolute;
  inset: 0;
  width: 100%;
  height: 100%;
}
.scene path {
  vector-effect: non-scaling-stroke;
}
.minor,
.major,
.x,
.y,
.x-over,
.y-over,
.ghost {
  fill: none;
}
.minor {
  stroke: #ececec;
}
.major {
  stroke: #d0d0d0;
}
.x {
  stroke: #ff9494;
}
.y {
  stroke: #8cf58c;
}
.x-over {
  stroke: #b0342e;
}
.y-over {
  stroke: #3bab34;
}
.ghost {
  stroke: #625e54;
}
.edge {
  stroke: #14130f;
  stroke-width: 1;
}
.cube {
  position: absolute;
  top: 0;
  right: 0;
  width: 260px;
}
.facelabel {
  font: 700 20px "Noto Sans", sans-serif;
  fill: #4c555f;
}
.axis {
  font: 500 29px "Noto Sans", sans-serif;
}
.browser {
  position: relative;
  padding: 8px 0 0 8px;
}
.panel {
  width: 600px;
  height: 49px;
  box-sizing: border-box;
  background: #f1f1f1;
  border: 1px solid #ccc;
  border-right-width: 2px;
  border-bottom-width: 2px;
  display: flex;
  align-items: center;
  padding: 0 23px 0 8px;
  position: relative;
}
.panel h2 {
  font: 400 22px "Noto Sans", sans-serif;
  color: #666;
  flex: 1;
}
.collapse svg {
  width: 20px;
  height: 14px;
  margin-right: 20px;
}
.knob svg {
  width: 17px;
  height: 17px;
}
.row {
  display: flex;
  align-items: center;
  height: 40px;
  margin: 8px 0 0 72px;
}
.root {
  margin: 11px 0 0 36px;
}
.tri {
  width: 16px;
  height: 20px;
  margin-right: 20px;
}
.cell {
  height: 40px;
  background: #f1f1f1;
  display: flex;
  align-items: center;
  gap: 18px;
  padding: 0 19px 0 6px;
  font: 400 21px "DejaVu Sans", sans-serif;
}
.name {
  margin-left: 10px;
}
.near {
  gap: 10px;
}
.root .cell {
  gap: 6px;
  padding: 0 15px 0 6px;
}
.chosen {
  width: 378px;
  height: 32px;
  margin-left: 6px;
  box-sizing: border-box;
  padding-left: 8px;
  background: #999;
  color: #fff;
  font: 700 23px "Noto Sans", sans-serif;
  display: flex;
  align-items: center;
  gap: 26px;
  white-space: nowrap;
}
.badge {
  width: 28px;
  height: 28px;
}
.badge text {
  font: 700 19px "Noto Sans", sans-serif;
  fill: #fff;
}
input[type="radio"] {
  appearance: none;
  width: 26px;
  height: 26px;
  margin: 0 0 0 12px;
  border: 2px solid #555;
  border-radius: 50%;
  background: radial-gradient(circle, #333 0 5px, #c8cede 6px, #f4f5f9 11px);
}
.comments {
  margin: auto 0 129px 8px;
  border-top: 0;
  padding-left: 49px;
}
.navbar {
  position: absolute;
  left: 50%;
  bottom: 12px;
  transform: translateX(-50%);
  height: 48px;
  padding: 0 6px 0 8px;
  background: #f1f1f1;
  display: flex;
  align-items: center;
  gap: 14px;
}
.navbar button {
  display: flex;
  align-items: center;
  gap: 6px;
}
.navbar .icon {
  width: 30px;
  height: 30px;
}
.navbar .wide {
  gap: 10px;
}
.navbar .plain {
  padding-right: 8px;
}
.timeline {
  height: 100px;
  box-sizing: border-box;
  border-top: 5px solid #ccc;
  background: #f1f1f1;
  display: flex;
  align-items: flex-start;
}
.playback {
  display: flex;
  gap: 17px;
  padding: 33px 46px 0 18px;
}
.track {
  display: flex;
  padding-top: 19px;
}
.step {
  position: relative;
  width: 48px;
  height: 64px;
  padding-top: 12px;
  display: flex;
  align-items: flex-start;
}
.step::before {
  content: "";
  position: absolute;
  left: 15px;
  bottom: 0;
  width: 100%;
  height: 4px;
  background: #ccc;
}
.step::after {
  content: "";
  position: absolute;
  left: 15px;
  bottom: 4px;
  width: 4px;
  height: 10px;
  background: #ccc;
}
.step:nth-last-child(2) {
  width: 28px;
}
.step:nth-last-child(2)::before {
  width: 4px;
}
.marker {
  width: 24px;
  height: 64px;
}
.settings {
  margin: 32px 27px 0 auto;
}
</style>
